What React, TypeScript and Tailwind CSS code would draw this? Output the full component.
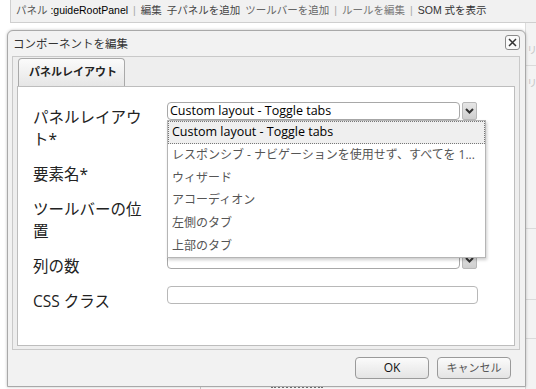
import React from 'react'

const jp = '"Open Sans", "Noto Sans CJK JP", sans-serif'
const ui = '"Liberation Sans", "Noto Sans CJK JP", sans-serif'

const options = [
  'Custom layout - Toggle tabs',
  'レスポンシブ - ナビゲーションを使用せず、すべてを 1...',
  'ウィザード',
  'アコーディオン',
  '左側のタブ',
  '上部のタブ',
]

function Chevron() {
  return (
    <svg width="9" height="6" viewBox="0 0 9 6">
      <path d="M1 1 L4.5 4.5 L8 1" fill="none" stroke="#333" strokeWidth="2" />
    </svg>
  )
}

function SelectBox({ value }: { value?: string }) {
  return (
    <div className="flex w-[310px] h-[18px]">
      <div className="flex-1 bg-white border border-[#a8a8a8] rounded-[4px] flex items-center pl-[2px] text-[12.5px] text-black leading-none">
        {value}
      </div>
      <div className="w-[15px] ml-[2px] border border-[#b8b8b8] rounded-[2px] bg-gradient-to-b from-[#e6e6e6] to-[#cfcfcf] flex items-center justify-center">
        <Chevron />
      </div>
    </div>
  )
}

function TextBox() {
  return <div className="w-[311px] h-[18px] bg-white border border-[#b8b8b8] rounded-[4px]" />
}

function Row({ label, children }: { label: React.ReactNode; children: React.ReactNode }) {
  return (
    <div className="flex">
      <div className="w-[134px] pt-[4px] text-[15.5px] leading-[22px] text-[#222]">{label}</div>
      <div>{children}</div>
    </div>
  )
}

export default function App() {
  return (
    <div className="relative w-[536px] h-[389px] overflow-hidden bg-white" style={{ fontFamily: jp }}>
      {/* page behind the dialog */}
      <div
        className="ml-[10px] h-[23px] bg-[#f1f1f1] border-l border-b border-[#cfcfcf] flex items-center pl-[5px] text-[10.5px] text-[#555] gap-[5px] whitespace-nowrap"
        style={{ fontFamily: ui }}
      >
        <span>パネル <span className="text-black">:guideRootPanel</span></span>
        <span className="text-[#aaa]">|</span>
        <span className="text-[#444]">編集</span>
        <span className="text-[#444]">子パネルを追加</span>
        <span className="text-[#666]">ツールバーを追加</span>
        <span className="text-[#aaa]">|</span>
        <span className="text-[#777]">ルールを編集</span>
        <span className="text-[#aaa]">|</span>
        <span className="text-[#333]">SOM 式を表示</span>
      </div>
      <div className="absolute left-[525px] top-[23px] w-[11px] h-[366px] bg-[#f3f3f3] border-l border-[#dcdcdc] text-[10px] text-[#c4c4c4] overflow-hidden">
        <div className="pt-[22px] pl-[1px] leading-none">リ</div>
        <div className="mt-[10px] border-t border-[#dadada] pt-[12px] pl-[1px] leading-none">リ</div>
        <div className="mt-[140px] border-t border-[#dadada]" />
        <div className="mt-[70px] border-t border-[#dadada]" />
        <div className="mt-[38px] border-t border-[#dadada]" />
      </div>
      <div className="absolute left-[200px] top-[386px] w-[336px] h-[3px] border-l border-[#ccc]">
        <div className="ml-[70px] w-[52px] h-full border-t-2 border-dotted border-[#777]" />
      </div>

      {/* dialog */}
      <div className="absolute left-[7px] top-[30px] w-[519px] h-[357px] bg-[#f2f2f2] border border-[#a9a9a9] rounded-t-[6px] shadow-[0_0_3px_rgba(0,0,0,0.25)] flex flex-col">
        <div className="h-[25px] flex items-center justify-between pl-[5px] pr-[5px] pt-[1px]">
          <span className="text-[11.5px] text-[#333]">コンポーネントを編集</span>
          <div className="w-[15px] h-[15px] border border-[#8a8a8a] rounded-[3px] bg-[#fafafa] flex items-center justify-center mt-[-4px]">
            <svg width="9" height="9" viewBox="0 0 9 9">
              <path d="M1 1 L8 8 M8 1 L1 8" stroke="#333" strokeWidth="1.5" />
            </svg>
          </div>
        </div>

        <div className="ml-[4px] mr-[5px] h-[294px] border border-[#c9c9c9] bg-[#eeeeee] flex flex-col px-[4px] pb-[3px]">
          <div className="h-[29px] flex items-end pl-[1px]">
            <div className="w-[107px] h-[28px] border border-b-0 border-[#a9a9a9] rounded-t-[4px] bg-gradient-to-b from-[#fbfbfb] to-[#e6e6e6] flex items-center pl-[10px] text-[11px] font-bold text-[#222] whitespace-nowrap">
              パネルレイアウト
            </div>
          </div>
          <div className="relative flex-1 bg-white border border-[#bdbdbd] pl-[15px] pt-[15px] flex flex-col gap-[9px]">
            <Row label={<>パネルレイアウ<br />ト*</>}>
              <SelectBox value="Custom layout - Toggle tabs" />
            </Row>
            <Row label="要素名*">
              <TextBox />
            </Row>
            <Row label={<>ツールバーの位<br />置</>}>
              <SelectBox />
            </Row>
            <Row label="列の数">
              <SelectBox />
            </Row>
            <Row label="CSS クラス">
              <TextBox />
            </Row>

            {/* open dropdown list */}
            <div className="absolute left-[149px] top-[33px] w-[319px] bg-white border border-[#b5b5b5] shadow-[1px_2px_3px_rgba(0,0,0,0.2)]">
              {options.map((o, i) => (
                <div
                  key={o}
                  className={
                    i === 0
                      ? 'h-[23px] flex items-center pl-[3px] bg-[#efefef] border border-dotted border-[#777] text-black text-[12.5px] whitespace-nowrap'
                      : 'h-[22.6px] flex items-center pl-[4px] text-[#555] text-[12px] whitespace-nowrap'
                  }
                >
                  {o}
                </div>
              ))}
            </div>
          </div>
        </div>

        <div className="flex-1 flex justify-end items-start pt-[7px] pr-[14px] gap-[8px]">
          <button className="w-[74px] h-[22px] border border-[#9a9a9a] rounded-[4px] bg-gradient-to-b from-[#fbfbfb] to-[#e4e4e4] text-[12px] text-[#111]">
            OK
          </button>
          <button className="w-[74px] h-[22px] border border-[#9a9a9a] rounded-[4px] bg-gradient-to-b from-[#fbfbfb] to-[#e4e4e4] text-[11px] text-[#555]">
            キャンセル
          </button>
        </div>
      </div>
    </div>
  )
}
